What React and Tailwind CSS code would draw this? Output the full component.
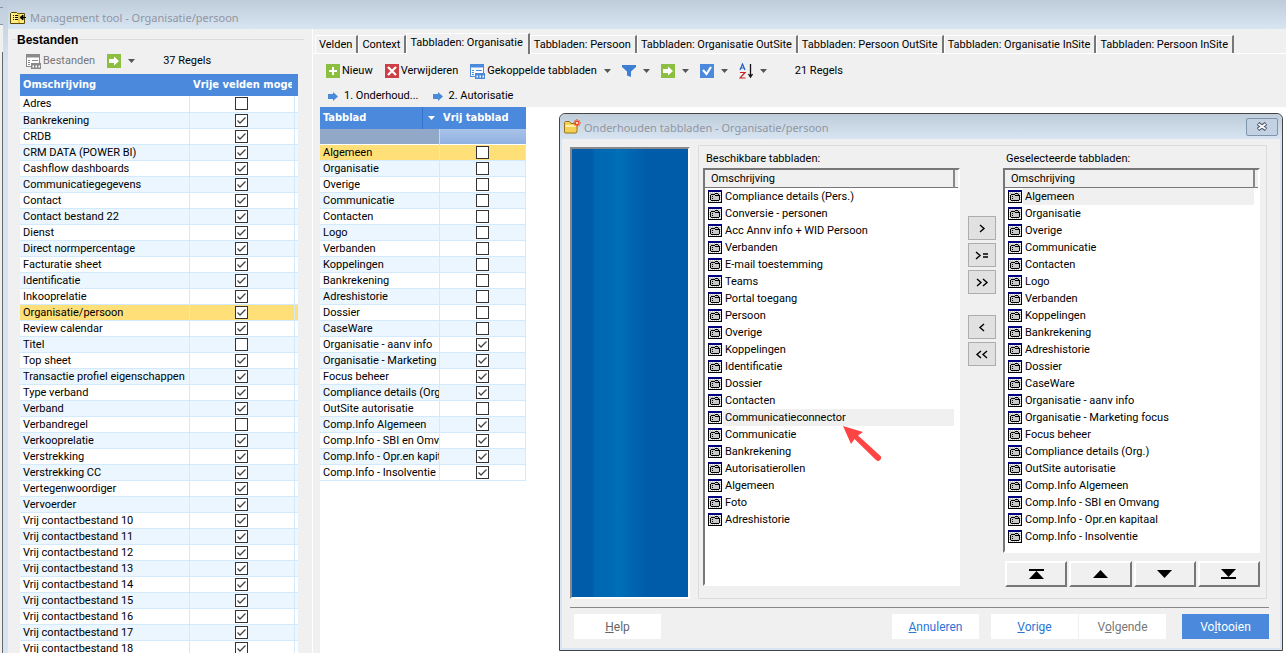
import React, { useState } from 'react'

const BESTANDEN = [
  ['Adres', false], ['Bankrekening', true], ['CRDB', true], ['CRM DATA (POWER BI)', true],
  ['Cashflow dashboards', true], ['Communicatiegegevens', true], ['Contact', true],
  ['Contact bestand 22', true], ['Dienst', true], ['Direct normpercentage', true],
  ['Facturatie sheet', true], ['Identificatie', true], ['Inkooprelatie', true],
  ['Organisatie/persoon', true], ['Review calendar', true], ['Titel', false],
  ['Top sheet', true], ['Transactie profiel eigenschappen', true], ['Type verband', true],
  ['Verband', true], ['Verbandregel', false], ['Verkooprelatie', true], ['Verstrekking', true],
  ['Verstrekking CC', true], ['Vertegenwoordiger', true], ['Vervoerder', true],
  ['Vrij contactbestand 10', true], ['Vrij contactbestand 11', true], ['Vrij contactbestand 12', true],
  ['Vrij contactbestand 13', true], ['Vrij contactbestand 14', true], ['Vrij contactbestand 15', true],
  ['Vrij contactbestand 16', true], ['Vrij contactbestand 17', true], ['Vrij contactbestand 18', true],
]

const TABBLADEN = [
  ['Algemeen', false], ['Organisatie', false], ['Overige', false], ['Communicatie', false],
  ['Contacten', false], ['Logo', false], ['Verbanden', false], ['Koppelingen', false],
  ['Bankrekening', false], ['Adreshistorie', false], ['Dossier', false], ['CaseWare', false],
  ['Organisatie - aanv info', true], ['Organisatie - Marketing focus', true], ['Focus beheer', true],
  ['Compliance details (Org.)', true], ['OutSite autorisatie', false], ['Comp.Info Algemeen', true],
  ['Comp.Info - SBI en Omvang', true], ['Comp.Info - Opr.en kapitaal', true], ['Comp.Info - Insolventie', true],
]

const BESCHIKBAAR = [
  'Compliance details (Pers.)', 'Conversie - personen', 'Acc Annv info + WID Persoon', 'Verbanden',
  'E-mail toestemming', 'Teams', 'Portal toegang', 'Persoon', 'Overige', 'Koppelingen',
  'Identificatie', 'Dossier', 'Contacten', 'Communicatieconnector', 'Communicatie',
  'Bankrekening', 'Autorisatierollen', 'Algemeen', 'Foto', 'Adreshistorie',
]

const TABS = [
  'Velden', 'Context', 'Tabbladen: Organisatie', 'Tabbladen: Persoon', 'Tabbladen: Organisatie OutSite',
  'Tabbladen: Persoon OutSite', 'Tabbladen: Organisatie InSite', 'Tabbladen: Persoon InSite',
]

const UI = "font-['Noto_Sans',sans-serif]"
const HEAD = "font-['DejaVu_Sans_Condensed','Noto_Sans',sans-serif]"
const SANS = "font-[Roboto,'Liberation_Sans',sans-serif]"

function Check({ label, checked }) {
  return (
    <span className="relative mx-auto block h-[13px] w-[13px]">
      <input type="checkbox" aria-label={label} defaultChecked={checked} className="peer block h-[13px] w-[13px] appearance-none border border-[#333] bg-white" />
      <svg viewBox="0 0 13 13" className="pointer-events-none absolute inset-0 hidden h-[13px] w-[13px] peer-checked:block" aria-hidden="true">
        <path d="M2.500 6.500 5 9l5.500-5.500" fill="none" stroke="#444" strokeWidth="1.300" />
      </svg>
    </span>
  )
}

function Caret() {
  return (
    <svg width="7" height="4" viewBox="0 0 7 4" className="shrink-0" aria-hidden="true">
      <path d="M0 0h7L3.500 4z" fill="#555" />
    </svg>
  )
}

function Square({ color, children }) {
  return (
    <svg width="14" height="14" viewBox="0 0 14 14" className="shrink-0" aria-hidden="true">
      <rect width="14" height="14" fill={color} />
      {children}
    </svg>
  )
}

function GoIcon() {
  return <Square color="#8cbf3f"><path d="M2 5h5V2.500L12 7l-5 4.500V9H2z" fill="#fff" /></Square>
}

function FormIcon({ color }) {
  return (
    <svg width="15" height="15" viewBox="0 0 15 15" className="shrink-0" aria-hidden="true">
      <rect x=".5" y=".5" width="13" height="12" fill="#fff" stroke={color} />
      <rect width="14" height="3.500" fill={color} />
      <path d="M2 6.500h2M6 6.500h6M2 8.500h2M2 10.500h2" stroke={color} />
      <rect x="5" y="9" width="10" height="6" fill={color} />
      <path d="M6.500 12.500h1.500M9.500 12.500H11M12.500 12.500H14" stroke="#fff" strokeWidth="2" />
    </svg>
  )
}

function StepArrow() {
  return (
    <svg width="10" height="9" viewBox="0 0 10 9" className="shrink-0" aria-hidden="true">
      <path d="M0 2h5V0l5 4.500L5 9V7H0z" fill="#4a8ad8" />
    </svg>
  )
}

function PageIcon() {
  return (
    <svg width="14" height="13" viewBox="0 0 14 13" shapeRendering="crispEdges" aria-hidden="true">
      <rect width="14" height="13" fill="#000" />
      <rect width="14" height="2" fill="#000080" />
      <rect x="1" y="2" width="12" height="10" fill="#c8c8c8" />
      <path d="M1 2.500h12M1 11.500h12" stroke="#fff" strokeDasharray="1 1" />
      <path d="M1.500 2v10M12.500 2v10" stroke="#fff" strokeDasharray="1 1" />
      {/* folder with two tabs */}
      <path d="M3 4h3v1H3zM7 3h3v1H7zM6 4h1v1H6zM10 4h1v1h-1zM7 5h4v1H7zM2 5h1v5H2zM11 5h1v5h-1zM3 10h8v1H3z" fill="#000" />
      <path d="M4 6h1v1H4zM4 8h1v1H4z" fill="#000" />
    </svg>
  )
}

function Tool({ icon, children, caret, label, className = '' }) {
  return (
    <button type="button" aria-label={label} className={`flex items-center ${className}`}>
      {icon}
      {children && <span className="ml-0.5">{children}</span>}
      {caret && <span className="ml-[7px]"><Caret /></span>}
    </button>
  )
}

function BestandenPanel() {
  return (
    <section className="flex w-[304px] shrink-0 flex-col pl-1 pr-2">
      <div className="flex h-[21px] shrink-0 items-center">
        <span className="h-px w-1 bg-[#dcdcdc]" />
        <h2 className="px-px font-['Liberation_Sans',Arial,sans-serif] text-xs font-bold text-black">Bestanden</h2>
        <span className="h-px flex-1 bg-[#dcdcdc]" />
      </div>
      <div className={`flex h-6 shrink-0 items-center pb-0.5 pl-3.5 ${SANS}`}>
        <Tool icon={<FormIcon color="#8a8a8a" />} className="text-[#777]">Bestanden</Tool>
        <Tool icon={<GoIcon />} caret label="Acties" className="ml-3" />
        <span className="ml-7">37 Regels</span>
      </div>
      <div className="ml-2 w-[278px]">
        <table className="w-full table-fixed border-collapse">
          <colgroup><col className="w-[169px]" /><col className="w-[105px]" /><col /></colgroup>
          <thead className={`bg-[#4a89dc] text-left text-white ${HEAD}`}>
            <tr className="h-[22px]">
              <th className="p-0 pl-[3px]">Omschrijving</th>
              <th className="overflow-hidden whitespace-nowrap p-0 pl-1">
                <span className="block w-[99px] overflow-hidden">Vrije velden moge</span>
              </th>
              <th className="p-0" />
            </tr>
          </thead>
          <tbody className={SANS}>
            {BESTANDEN.map(([name, checked], i) => {
              const selected = name === 'Organisatie/persoon'
              return (
                <tr key={name} className={`h-4 ${selected ? 'bg-[#ffdf78]' : i % 2 ? 'bg-[#ebf6ff]' : 'bg-white'}`}>
                  <td className="truncate border-b border-r border-[#d3eafc] p-0 pl-[3px] leading-[15px]">{name}</td>
                  <td className="border-b border-r border-[#d3eafc] p-0"><Check label={name} checked={checked} /></td>
                  <td className="border-b border-[#d3eafc] p-0" />
                </tr>
              )
            })}
          </tbody>
        </table>
      </div>
    </section>
  )
}

function TabStrip() {
  const [active, setActive] = useState(2)
  return (
    <div role="tablist" className={`flex h-5 items-end whitespace-nowrap border-b border-white pl-0.5 text-black ${SANS}`}>
      {TABS.map((tab, i) => (
        <button
          key={tab}
          type="button"
          role="tab"
          aria-selected={i === active}
          onClick={() => setActive(i)}
          className={`border-l border-r-2 border-t border-white border-r-[#777] bg-[#f0f0f0] pl-[3px] ${i === active ? '-mb-px h-[21px] pb-0.5 pr-[5px]' : 'h-[18px] pr-1'}`}
        >
          {tab}
        </button>
      ))}
    </div>
  )
}

function Toolbar() {
  return (
    <div className={`pl-[13px] text-black ${SANS}`}>
      <div className="flex h-[34px] items-center">
        <Tool icon={<Square color="#8cbf3f"><path d="M7 3v8M3 7h8" stroke="#fff" strokeWidth="2" /></Square>}>Nieuw</Tool>
        <Tool icon={<Square color="#cc3f44"><path d="m3 3 8 8M11 3l-8 8" stroke="#fff" strokeWidth="2.200" /></Square>} className="ml-3">Verwijderen</Tool>
        <Tool icon={<FormIcon color="#4a89dc" />} caret className="ml-3">Gekoppelde tabbladen</Tool>
        <Tool
          label="Filter"
          caret
          className="ml-[11px]"
          icon={<svg width="14" height="12" viewBox="0 0 14 12" aria-hidden="true"><path d="M0 0h14v2L9 6.500V12l-4-1.500v-4L0 2z" fill="#3d7fd2" /></svg>}
        />
        <Tool icon={<GoIcon />} caret label="Acties" className="ml-[11px]" />
        <Tool icon={<Square color="#4a89dc"><path d="m3 6 3.500 4 4.500-7" fill="none" stroke="#fff" strokeWidth="2.200" /></Square>} caret label="Selecteren" className="ml-[11px]" />
        <Tool
          label="Sorteren"
          caret
          className="ml-[11px]"
          icon={
            <svg width="14" height="16" viewBox="0 0 14 16" aria-hidden="true">
              <path d="M1 7 3.500 1 6 7M2 5h3" fill="none" stroke="#1d5fc9" strokeWidth="1.200" />
              <path d="M1 9.500h5L1 15h5.500" fill="none" stroke="#c22" strokeWidth="1.200" />
              <path d="M11.500 1v13M9.500 11l2 3 2-3" fill="none" stroke="#111" strokeWidth="1.300" />
            </svg>
          }
        />
        <span className="ml-7">21 Regels</span>
      </div>
      <div className="flex h-[19px] items-start gap-3.5 pl-0.5">
        <button type="button" className="flex items-center gap-1.5"><StepArrow />1. Onderhoud...</button>
        <button type="button" className="flex items-center gap-1.5"><StepArrow />2. Autorisatie</button>
      </div>
    </div>
  )
}

function TabbladenTable() {
  return (
    <div className="w-[206px]">
      <table className="w-full table-fixed border-collapse">
        <colgroup><col className="w-[119px]" /><col /></colgroup>
        <thead className={HEAD}>
          <tr className="h-[22px] bg-[#4a89dc] text-left text-white">
            <th className="p-0 pl-[3px]">
              <span className="flex items-center justify-between">
                Tabblad
                <span className="flex h-[22px] w-[17px] items-center justify-center border-l border-[#2f73cc]">
                  <svg width="7" height="4" viewBox="0 0 7 4" aria-hidden="true"><path d="M0 0h7L3.500 4z" fill="#fff" /></svg>
                </span>
              </span>
            </th>
            <th className="whitespace-nowrap p-0 pl-1">Vrij tabblad</th>
          </tr>
          <tr className="h-[15px] border-b border-white">
            <td className="border-r border-[#c5daf3] bg-[#92a8c9] p-0" />
            <td className="bg-linear-to-b from-[#a9c3e8] to-[#8fb0e0] p-0" />
          </tr>
        </thead>
        <tbody className={SANS}>
          {TABBLADEN.map(([name, checked], i) => (
            <tr key={name} className={`h-4 ${i === 0 ? 'bg-[#ffdf78]' : i % 2 ? 'bg-[#ebf6ff]' : 'bg-white'}`}>
              <td className="overflow-hidden whitespace-nowrap border-b border-r border-[#d3eafc] p-0 pl-[3px] leading-[15px]">{name}</td>
              <td className="border-b border-r border-[#d3eafc] p-0"><Check label={name} checked={checked} /></td>
            </tr>
          ))}
        </tbody>
      </table>
    </div>
  )
}

function PickList({ title, items, selected, className }) {
  return (
    <div className={`border-2 border-b-white border-l-[#777] border-r-white border-t-[#777] bg-white pb-px ${className}`}>
      <table className="w-full table-fixed border-collapse" aria-label={title}>
        <colgroup><col className="w-[18px]" /><col /><col className="w-1" /></colgroup>
        <thead>
          <tr className="h-[17px] border-b border-[#777] bg-[#f0f0f0] text-left">
            <th colSpan={2} className="border-r-2 border-r-[#888] p-0 pl-1.5 pt-px font-normal leading-4">Omschrijving</th>
            <th className="p-0" />
          </tr>
        </thead>
        <tbody>
          {items.map(item => (
            <tr key={item} className="h-[17px]">
              <td className="p-0 pl-[3px]"><PageIcon /></td>
              <td className={`p-0 pl-0.5 leading-[17px] ${item === selected ? 'bg-[#f0f0f0]' : ''}`}>{item}</td>
              <td className="p-0" />
            </tr>
          ))}
        </tbody>
      </table>
    </div>
  )
}

function MoveButton({ label, d, className = '' }) {
  return (
    <button type="button" aria-label={label} className={`flex h-6 w-7 items-center justify-center border border-[#adadad] bg-[#e1e1e1] ${className}`}>
      <svg width="14" height="9" viewBox="0 0 14 9" aria-hidden="true">
        <path d={d} fill="none" stroke="#000" strokeWidth="1.400" />
      </svg>
    </button>
  )
}

function OrderButton({ label, d }) {
  return (
    <button type="button" aria-label={label} className="flex h-[26px] flex-1 items-center justify-center border-2 border-b-[#777] border-l-white border-r-[#777] border-t-white bg-[#f0f0f0]">
      <svg width="15" height="10" viewBox="0 0 15 10" aria-hidden="true"><path d={d} fill="#000" /></svg>
    </button>
  )
}

function FooterButton({ children, className }) {
  return <button type="button" className={`h-[25px] w-[87px] text-xs ${className}`}>{children}</button>
}

function Dialog() {
  return (
    <div role="dialog" aria-label="Onderhouden tabbladen" className={`absolute left-[246px] right-[3px] top-[84px] rounded-t-md border border-[#444] bg-[#d7e4f2] text-black ${SANS}`}>
      <header className="flex h-[25px] items-center rounded-t-md bg-linear-to-b from-[#bfcddb] to-[#d7e4f2] pl-1 pr-1">
        <svg width="17" height="16" viewBox="0 0 17 16" aria-hidden="true">
          <path d="M.5 13V3.500l1-1h4l1.500 2h5l1 1V13l-1 1h-11z" fill="#f3cf55" stroke="#9a7418" />
          <path d="M1.500 7h11" stroke="#fff2b0" strokeWidth="2" />
          <path d="M13 0v8M9 4h8M10.500 1.500l5 5M15.500 1.500l-5 5" stroke="#f0461e" strokeWidth="1.100" />
          <circle cx="13" cy="4" r="1" fill="#fff" />
        </svg>
        <h1 className={`ml-[3px] flex-1 pt-0.5 text-[11px] text-[#9295a0] ${UI}`}>Onderhouden tabbladen - Organisatie/persoon</h1>
        <button type="button" aria-label="Sluiten" className="flex h-[18px] w-8 items-center justify-center rounded-xs border border-[#8094ad] bg-[#c3d2e3]">
          <svg width="12" height="9" viewBox="0 0 12 9" aria-hidden="true">
            <path d="m2 1.500 8 6M10 1.500l-8 6" stroke="#4a5568" strokeWidth="4" />
            <path d="m2.500 2 7 5M9.500 2l-7 5" stroke="#fff" strokeWidth="1.800" />
          </svg>
        </button>
      </header>
      <div className="mx-0.5 mb-0.5 bg-[#f0f0f0] pb-[9px] pl-2 pr-[11px] pt-1.5">
        <div className="flex gap-2 pr-0.5">
          <div className="mt-0.5 w-[120px] shrink-0 border-2 border-b-white border-l-[#888] border-r-white border-t-[#888] bg-[linear-gradient(to_right,#005ba8_18%,#0068b2_19%,#006ab4_37%,#0070ba_38%,#005ba8_66%)]" />
          <div className="flex flex-1 border border-[#dcdcdc] pb-[11px] pl-1 pr-1.5 pt-1">
            <div className="flex flex-1 flex-col">
              <h3 className="h-[18px] pl-[3px] leading-[18px]">Beschikbare tabbladen:</h3>
              <PickList title="Beschikbare tabbladen" items={BESCHIKBAAR} selected="Communicatieconnector" className="h-[418px]" />
            </div>
            <div className="flex w-[43px] shrink-0 flex-col items-center gap-[3px] pt-[66px]">
              <MoveButton label="Toevoegen" d="m5 1 4 3.500L5 8" />
              <MoveButton label="Toevoegen vanaf" d="m1 1 4 3.500L1 8M8 3h5M8 6h5" />
              <MoveButton label="Alles toevoegen" d="m2 1 4 3.500L2 8M8 1l4 3.500L8 8" />
              <MoveButton label="Verwijderen" d="M9 1 5 4.500 9 8" className="mt-[18px]" />
              <MoveButton label="Alles verwijderen" d="M6 1 2 4.500 6 8M12 1 8 4.500 12 8" />
            </div>
            <div className="flex flex-1 flex-col">
              <h3 className="h-[18px] pl-[3px] leading-[18px]">Geselecteerde tabbladen:</h3>
              <PickList title="Geselecteerde tabbladen" items={TABBLADEN.map(t => t[0])} selected="Algemeen" className="h-[385px]" />
              <div className="flex gap-0.5 pl-0.5 pt-2">
                <OrderButton label="Bovenaan" d="M0 0h15v2H0zM0 10h15L7.500 2z" />
                <OrderButton label="Omhoog" d="M0 9h15L7.500 1z" />
                <OrderButton label="Omlaag" d="M0 1h15L7.500 9z" />
                <OrderButton label="Onderaan" d="M0 0h15L7.500 8zM0 8h15v2H0z" />
              </div>
            </div>
          </div>
        </div>
        <footer className="mt-2 flex border-t border-[#888] pl-1 pt-1.5">
          <FooterButton className="bg-white text-[#666]"><u>H</u>elp</FooterButton>
          <FooterButton className="ml-auto bg-white text-[#2a76d8]"><u>A</u>nnuleren</FooterButton>
          <FooterButton className="ml-3 bg-white text-[#2a76d8]"><u>V</u>orige</FooterButton>
          <FooterButton className="ml-px bg-white text-[#777]">V<u>o</u>lgende</FooterButton>
          <FooterButton className="ml-4 bg-[#4a89dc] text-white">Vo<u>l</u>tooien</FooterButton>
        </footer>
      </div>
      {/* pointer to the highlighted row */}
      <svg width="40" height="38" viewBox="0 0 40 38" className="pointer-events-none absolute left-[282px] top-[311px]" aria-hidden="true">
        <path d="M1 1l20 6-5 3.500L38 30.500a2.800 2.800 0 0 1-4 4.500L12.500 14 9 19z" fill="#ff4444" />
      </svg>
    </div>
  )
}

export default function App() {
  return (
    <div className={`flex h-screen overflow-hidden bg-[#d7e4f2] text-[11px] leading-4 text-black ${UI}`}>
      <div className="flex w-2 shrink-0 flex-col bg-linear-to-b from-[#bfcddb] to-[#d7e4f2] to-10%">
        <span className="mt-[7px] h-[18px] w-[3px] border-y border-[#8295ac]" />
        <span className="h-[27px] w-[3px] bg-[#f0f0f0]" />
        <span className="w-[3px] flex-1 border-r border-[#666] bg-[#f0f0f0]" />
      </div>
      <div className="flex min-w-0 flex-1 flex-col">
        <header className="flex h-[29px] shrink-0 items-center bg-linear-to-b from-[#bfcddb] to-[#d7e4f2] pl-0.5 pt-1.5">
          <svg width="16" height="14" viewBox="0 0 16 14" aria-hidden="true">
            <path d="M.5 12.500v-10l1-1h5l1 1h7v10z" fill="#ffec80" stroke="#5a4a00" />
            <path d="M9 2v10" stroke="#c9a21c" />
            <path d="M3 4.500h1M5 4.500h3M3 6.500h1M5 6.500h3M3 8.500h1M5 8.500h3" stroke="#111" />
            <path d="M16 6.500h-4M13 4l-3 2.500L13 9z" fill="#000" stroke="#000" />
          </svg>
          <span className="ml-1 text-[#9295a0]">Management tool - Organisatie/persoon</span>
        </header>
        <div className="flex min-h-0 flex-1 bg-[#f0f0f0]">
          <BestandenPanel />
          <main className="relative flex min-w-0 flex-1 flex-col border-l border-white pt-[5px]">
            <TabStrip />
            <Toolbar />
            <div className="ml-[7px] flex-1 bg-white">
              <TabbladenTable />
            </div>
            <Dialog />
          </main>
        </div>
      </div>
    </div>
  )
}
